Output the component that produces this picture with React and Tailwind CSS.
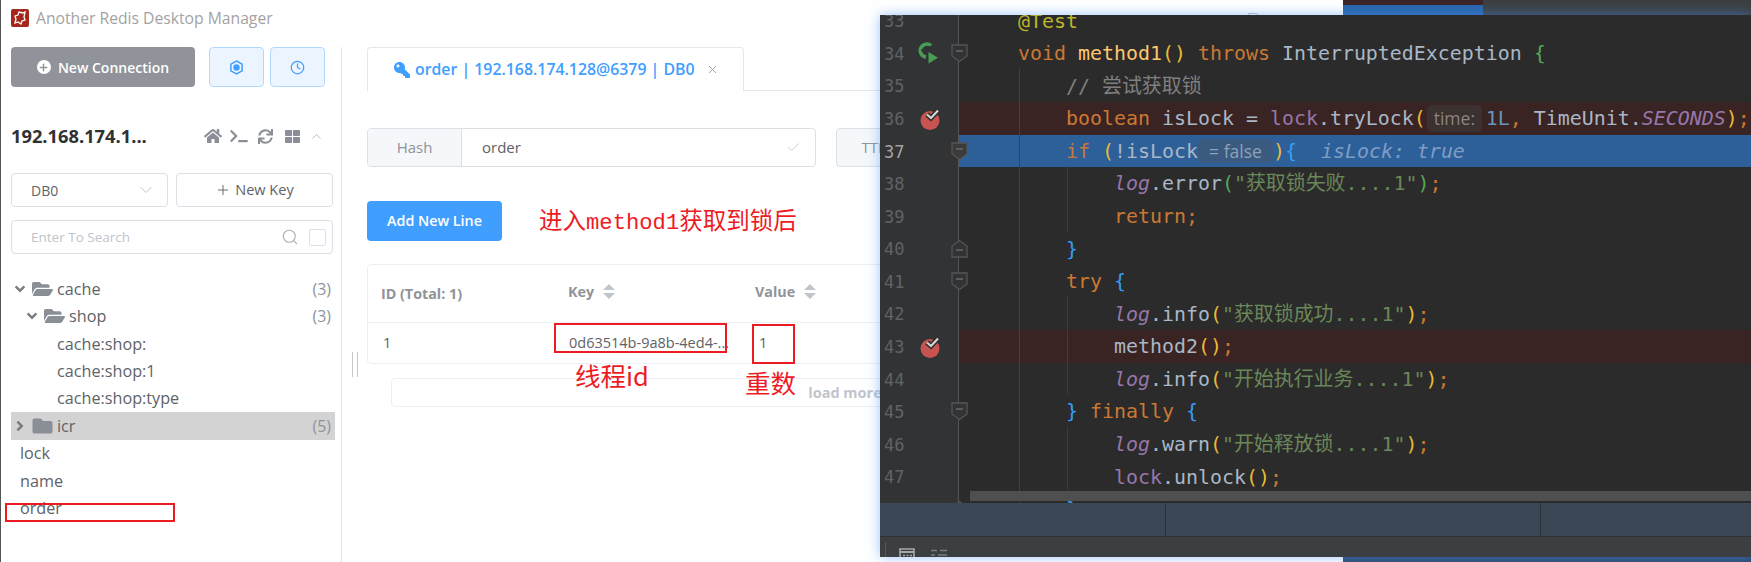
import React from "react";
import { FaHome, FaTerminal, FaSync, FaThLarge, FaFolderOpen, FaFolder, FaKey, FaAngleDown, FaAngleRight } from "react-icons/fa";
import { ChevronDown, ChevronUp, Check, Clock, Plus, Search, X, Square } from "lucide-react";

const ui = "font-['Open_Sans','Noto_Sans_CJK_SC',sans-serif]";

const kw = "text-[#cc7832]";
const pl = "text-[#a9b7c6]";
const pu = "text-[#9876aa]";
const lg = "text-[#9876aa] italic";
const st = "text-[#6a8759]";
const ye = "text-[#e8ba36]";
const gr = "text-[#54a857]";
const bl = "text-[#359ff4]";

const logCall = (fn, str, paren = ye) => [
  ["        "],
  ["log", lg],
  ["." + fn, pl],
  ["(", paren],
  [str, st],
  [")", paren],
  [";", kw],
];

const lines = [
  { n: 33, code: [["@Test", "text-[#bbb529]"]] },
  {
    n: 34,
    mark: "run",
    fold: "down",
    code: [["void", kw], [" "], ["method1", "text-[#ffc66d]"], ["()", ye], [" "], ["throws", kw], [" InterruptedException", pl], [" "], ["{", gr]],
  },
  { n: 35, code: [["    // 尝试获取锁", "text-[#808080]"]] },
  {
    n: 36,
    mark: "break",
    bg: "bg-[#3a2323]",
    code: [
      ["    "],
      ["boolean", kw],
      [" isLock = ", pl],
      ["lock", pu],
      [".tryLock", pl],
      ["(", ye],
      { hint: "time:", cls: "w-[55px] h-[27px] ml-[1px] mr-[4px] bg-[#3b3130] text-[#8a8482]" },
      ["1L", "text-[#6897bb]"],
      [",", kw],
      [" TimeUnit.", pl],
      ["SECONDS", lg],
      [")", ye],
      [";", kw],
    ],
  },
  {
    n: 37,
    current: true,
    fold: "down",
    bg: "bg-[#2d5f99]",
    code: [
      ["    "],
      ["if", kw],
      [" "],
      ["(", ye],
      ["!isLock", pl],
      { hint: "= false", cls: "w-[75px] h-[24px] bg-[#3b5a80] text-[#8ea2b8]" },
      [")", ye],
      ["{", bl],
      ["  isLock: true", "text-[#7e9dc4] italic"],
    ],
  },
  { n: 38, code: logCall("error", '"获取锁失败....1"', gr) },
  { n: 39, code: [["        return;", kw]] },
  { n: 40, fold: "up", code: [["    "], ["}", bl]] },
  { n: 41, fold: "down", code: [["    "], ["try", kw], [" "], ["{", bl]] },
  { n: 42, code: logCall("info", '"获取锁成功....1"') },
  { n: 43, mark: "break", bg: "bg-[#3a2323]", code: [["        method2", pl], ["()", ye], [";", kw]] },
  { n: 44, code: logCall("info", '"开始执行业务....1"') },
  { n: 45, fold: "down", code: [["    "], ["}", bl], [" "], ["finally", kw], [" "], ["{", bl]] },
  { n: 46, code: logCall("warn", '"开始释放锁....1"') },
  { n: 47, code: [["        "], ["lock", pu], [".unlock", pl], ["()", ye], [";", kw]] },
  { n: 48, fold: "up", code: [["    "], ["}", bl]] },
];

const BreakMark = () => (
  <svg width="24" height="24" viewBox="0 0 24 24" className="absolute left-[39px] top-[5px]">
    <circle cx="11" cy="13.5" r="9.5" fill="#c75450" />
    <path d="M8 7.5l4 3.5 7-7.5" fill="none" stroke="#2b2b2b" strokeWidth="5" />
    <path d="M8 7.5l4 3.5 7-7.5" fill="none" stroke="#d6d6d6" strokeWidth="2.2" />
  </svg>
);

const RunMark = () => (
  <svg width="22" height="22" viewBox="0 0 22 22" className="absolute left-[37px] top-[5px]">
    <path d="M14 3.6A6.5 6.5 0 1 0 9 15" fill="none" stroke="#499c54" strokeWidth="3.6" />
    <path d="M4.5 7.5l3.2 3 5.5-6" fill="none" stroke="#313335" strokeWidth="2" />
    <path d="M11.5 10l9.5 5.7-9.5 5.7z" fill="#499c54" />
  </svg>
);

const FoldMark = ({ dir, dark }) => (
  <svg width="17" height="19" viewBox="0 0 17 19" className="absolute left-[71px] top-[7px]">
    {dir === "down" ? (
      <path d="M1 1h15v11l-7.5 5.5L1 12z" fill={dark ? "#3b3b3b" : "#313335"} stroke="#555" strokeWidth="1.3" />
    ) : (
      <path d="M1 18h15V7L8.5 1.5 1 7z" fill="#313335" stroke="#555" strokeWidth="1.3" />
    )}
    <path d={dir === "down" ? "M5 7h7" : "M5 11h7"} stroke="#777" strokeWidth="1.2" />
  </svg>
);

const CodeLine = ({ line }) => (
  <div className="flex h-[32.57px] shrink-0">
    <div className="relative w-[79px] shrink-0 border-r border-[#555555] bg-[#313335] pl-[4px] pt-[1px] text-[17px] leading-[32.57px]">
      <span className={line.current ? "text-[#a4a3a3]" : "text-[#606366]"}>{line.n}</span>
      {line.mark === "break" && <BreakMark />}
      {line.mark === "run" && <RunMark />}
      {line.fold && <FoldMark dir={line.fold} dark={line.current} />}
    </div>
    <div className={`flex flex-1 items-center whitespace-pre pl-[59px] pt-[2px] text-[19.93px] ${line.bg || ""}`}>
      {line.code.map((t, i) =>
        t.hint ? (
          <span key={i} className={`${ui} -mt-[2px] flex items-center justify-center rounded-[5px] text-[17.5px] ${t.cls}`}>
            {t.hint}
          </span>
        ) : (
          <span key={i} className={t[1]}>
            {t[0]}
          </span>
        )
      )}
    </div>
  </div>
);

const EditorWindow = () => (
  <div className="absolute left-[880px] top-[15px] flex h-[542px] w-[871px] flex-col bg-[#2b2b2b] font-['DejaVu_Sans_Mono','Noto_Sans_CJK_SC',monospace] shadow-[0_0_12px_rgba(70,150,255,0.55)]">
    <div className="relative h-[488px] shrink-0 overflow-hidden">
      <div className="-mt-[10.7px] flex flex-col">
        {lines.map((l) => (
          <CodeLine key={l.n} line={l} />
        ))}
      </div>
      <div className="absolute left-[139px] top-[54px] bottom-0 w-px bg-[#3f4442]" />
      <div className="absolute left-[187px] top-[152px] h-[65px] w-px bg-[#2f4053]" />
      <div className="absolute left-[187px] top-[282px] h-[97px] w-px bg-[#2f4053]" />
      <div className="absolute left-[187px] top-[412px] h-[65px] w-px bg-[#2f4053]" />
      <div className="absolute bottom-[2px] left-[90px] right-0 h-[10px] bg-[#4f4f4f]" />
    </div>
    <div className="flex h-[34px] shrink-0 border-b border-[#2f3235] bg-[#3b4754]">
      <div className="w-[286px] border-r border-[#2f3235]" />
      <div className="w-[375px] border-r border-[#2f3235]" />
    </div>
    <div className="flex flex-1 items-start overflow-hidden bg-[#3c3f41] pl-[5px] pt-[5px]">
      <div className="h-[15px] w-px bg-[#55585a]" />
      <svg width="16" height="15" viewBox="0 0 16 15" className="ml-[13px] mt-[6px] shrink-0">
        <path d="M1 1h14v14H1z" fill="none" stroke="#a5a8aa" strokeWidth="1.6" />
        <path d="M1 4h14" stroke="#a5a8aa" strokeWidth="2" />
        <path d="M4 7.5h2M7.5 7.5h2M11 7.5h2" stroke="#a5a8aa" strokeWidth="1.6" />
      </svg>
      <svg width="16" height="15" viewBox="0 0 16 15" className="ml-[16px] mt-[6px] shrink-0">
        <path d="M0 2.5h6M9 2.5h7M0 7h4M7 7h9M2 12h10" stroke="#7a7d80" strokeWidth="1.6" />
      </svg>
    </div>
  </div>
);

const TreeRow = ({ pad, open, label, count, active, leaf }) => {
  const Folder = open ? FaFolderOpen : FaFolder;
  const Angle = open ? FaAngleDown : FaAngleRight;
  return (
    <div className={`flex h-[27.4px] items-center pr-[4px] ${active ? "bg-[#d3d3d3]" : ""}`} style={{ paddingLeft: pad }}>
      {!leaf && (
        <>
          <Angle className="-ml-[1px] mr-[4px] h-[16px] w-[16px] shrink-0 text-[#7a7d82]" />
          <Folder className="mr-[4px] h-[20px] w-[21px] shrink-0 text-[#8a8e96]" />
        </>
      )}
      <span className="text-[16.2px] text-[#606266]">{label}</span>
      {count && <span className="ml-auto text-[16px] text-[#909399]">{count}</span>}
    </div>
  );
};

const SortCaret = () => (
  <svg width="12" height="15" viewBox="0 0 12 15" className="ml-[9px]">
    <path d="M6 0l6 6H0zM0 9h12l-6 6z" fill="#c0c4cc" />
  </svg>
);

const Sidebar = () => (
  <aside className="w-[342px] shrink-0 border-r border-[#e4e5e8] pl-[11px] pr-[6px]">
    <div className="flex">
      <button className="flex h-[40px] w-[184px] items-center justify-center rounded-[4px] bg-[#909399] text-[14px] font-semibold text-white">
        <span className="mr-[7px] flex h-[14px] w-[14px] items-center justify-center rounded-full bg-white">
          <Plus size={11} strokeWidth={3} className="text-[#909399]" />
        </span>
        New Connection
      </button>
      <button className="ml-[14px] flex h-[40px] w-[55px] items-center justify-center rounded-[4px] border border-[#b3d8ff] bg-[#ecf5ff]">
        <svg width="15" height="15" viewBox="0 0 15 15">
          <path d="M7.5 1l5.6 3.2v6.6L7.5 14l-5.6-3.2V4.2z" fill="none" stroke="#409eff" strokeWidth="1.5" />
          <circle cx="7.5" cy="7.5" r="3.2" fill="#409eff" />
        </svg>
      </button>
      <button className="ml-[6px] flex h-[40px] w-[55px] items-center justify-center rounded-[4px] border border-[#b3d8ff] bg-[#ecf5ff]">
        <Clock size={15} className="text-[#409eff]" />
      </button>
    </div>
    <div className="mt-[34px] flex h-[30px] items-center">
      <span className="text-[18.3px] font-bold text-[#303133]">192.168.174.1...</span>
      <div className="ml-auto mr-[11px] flex items-center text-[#8a8e96]">
        <FaHome className="h-[18px] w-[18px]" />
        <FaTerminal className="ml-[7px] h-[14px] w-[20px]" />
        <FaSync className="ml-[9px] h-[15px] w-[15px]" />
        <FaThLarge className="ml-[12px] h-[15px] w-[15px]" />
        <ChevronUp size={15} className="ml-[9px] text-[#b4b7bd]" strokeWidth={1.5} />
      </div>
    </div>
    <div className="mt-[22px] flex w-[322px] gap-[8px]">
      <div className="flex h-[34px] w-[157px] items-center justify-between rounded-[4px] border border-[#dcdfe6] pl-[19px] pr-[11px] text-[14px] text-[#606266]">
        DB0
        <ChevronDown size={20} strokeWidth={1.2} className="text-[#c0c4cc]" />
      </div>
      <button className="flex h-[34px] w-[157px] items-center justify-center rounded-[4px] border border-[#dcdfe6] text-[14.5px] font-medium text-[#606266]">
        <Plus size={16} strokeWidth={1.4} className="mr-[4px]" />
        New Key
      </button>
    </div>
    <div className="mt-[13px] flex h-[34px] w-[322px] items-center rounded-[4px] border border-[#dcdfe6] pl-[19px] pr-[6px]">
      <span className="text-[13.5px] text-[#c0c4cc]">Enter To Search</span>
      <Search size={18} strokeWidth={1.5} className="ml-auto text-[#b0b3b9]" />
      <span className="ml-[10px] h-[17px] w-[17px] rounded-[2px] border border-[#dcdfe6]" />
    </div>
    <div className="mt-[21.3px]">
      <TreeRow pad={2} open label="cache" count="(3)" />
      <TreeRow pad={14} open label="shop" count="(3)" />
      <TreeRow pad={46} leaf label="cache:shop:" />
      <TreeRow pad={46} leaf label="cache:shop:1" />
      <TreeRow pad={46} leaf label="cache:shop:type" />
      <TreeRow pad={2} label="icr" count="(5)" active />
      <TreeRow pad={9} leaf label="lock" />
      <TreeRow pad={9} leaf label="name" />
      <TreeRow pad={9} leaf label="order" />
    </div>
  </aside>
);

const KeyPanel = () => (
  <main className="flex-1 pr-[20px]">
    <div className="flex h-[44px] border-b border-[#e4e7ed]">
      <div className="flex h-[44px] w-[377px] items-center rounded-t-[4px] border border-b-0 border-[#e4e7ed] bg-white pl-[26px] text-[15.85px] font-semibold text-[#409eff]">
        <FaKey className="mr-[5px] h-[16px] w-[16px] -scale-x-100" />
        order | 192.168.174.128@6379 | DB0
        <X size={13} strokeWidth={1.5} className="ml-[11px] text-[#909399]" />
      </div>
    </div>
    <div className="mt-[37px] flex">
      <div className="flex h-[39px] w-[449px] overflow-hidden rounded-[4px] border border-[#dcdfe6]">
        <div className="flex w-[94px] items-center justify-center border-r border-[#dcdfe6] bg-[#f5f7fa] text-[15px] text-[#909399]">Hash</div>
        <div className="flex flex-1 items-center justify-between pl-[20px] pr-[14px] text-[15px] text-[#606266]">
          order
          <Check size={15} strokeWidth={1.4} className="text-[#c0c4cc]" />
        </div>
      </div>
      <div className="ml-[19.5px] flex h-[39px] w-[300px] items-center rounded-[4px] border border-[#dcdfe6] bg-[#f5f7fa] pl-[25px] text-[15px] text-[#909399]">TTL</div>
    </div>
    <div className="mt-[34px] flex items-center">
      <button className="flex h-[40px] w-[135px] items-center justify-center rounded-[4px] bg-[#409eff] text-[14.3px] font-semibold text-white">Add New Line</button>
      <span className="ml-[37px] whitespace-nowrap font-['Noto_Sans_CJK_SC',serif] text-[23.5px] leading-[28px] text-[#ed1c24]">
        进入<span className="font-['Liberation_Mono',monospace] text-[22.2px]">method1</span>获取到锁后
      </span>
    </div>
    <div className="mt-[23px] rounded-[4px] border border-[#ebeef5]">
      <div className="flex h-[58px] items-center border-b border-[#ebeef5] text-[14.3px] font-bold text-[#909399]">
        <div className="w-[187px] pl-[13px]">ID (Total: 1)</div>
        <div className="flex w-[187px] -translate-y-[2px] items-center pl-[13px]">Key<SortCaret /></div>
        <div className="flex w-[187px] -translate-y-[2px] items-center pl-[13px]">Value<SortCaret /></div>
      </div>
      <div className="flex h-[40px] items-center text-[14.5px] text-[#606266]">
        <div className="w-[187px] pl-[15px]">1</div>
        <div className="w-[187px] pl-[14px]">0d63514b-9a8b-4ed4-...</div>
        <div className="w-[187px] pl-[17px]">1</div>
      </div>
    </div>
    <div className="mx-[24px] mt-[14px] flex h-[29px] items-center justify-center rounded-[4px] border border-[#ebeef5] text-[14.5px] font-bold text-[#c0c4cc]">
      load more
    </div>
  </main>
);

export default function App() {
  return (
    <div className={`relative h-[562px] w-[1751px] overflow-hidden bg-white ${ui}`}>
      {/* desktop behind the two windows */}
      <div className="absolute right-0 top-0 h-[562px] w-[408px] bg-[#2f4a6d]">
        <div className="flex h-[15px]">
          <div className="w-[140px]">
            <div className="h-[5px] bg-[#3c2525]" />
            <div className="h-[10px] bg-[#2a65a8]" />
          </div>
          <div className="flex-1 bg-[#3c3f41]" />
        </div>
      </div>

      <div className="relative flex h-[562px] w-[1343px] flex-col bg-white">
        <div className="flex h-[47px] shrink-0 items-start pl-[11px] pt-[9px] pr-[23px]">
          <svg width="18" height="18" viewBox="0 0 18 18" className="shrink-0">
            <rect width="18" height="18" rx="2" fill="#a5281b" />
            <path d="M4 7l3-1 1-3 4 1 2-1-1 5 1 3-3 1-1 3-3-2-3 1 1-4z" fill="none" stroke="#fff" strokeWidth="1.3" />
          </svg>
          <span className="ml-[7px] text-[15.7px] leading-[18px] text-[#a3a3a3]">Another Redis Desktop Manager</span>
          <Square size={12} strokeWidth={1} className="ml-auto mt-[3px] text-[#888]" />
          <X size={13} strokeWidth={1} className="ml-[48px] mt-[3px] text-[#888]" />
        </div>
        <div className="flex flex-1">
          <Sidebar />
          <div className="w-[25px] shrink-0 pl-[10px] pt-[305px]">
            <div className="h-[25px] w-[6px] border-x border-[#c8c8c8]" />
          </div>
          <KeyPanel />
        </div>
      </div>

      {/* strip of the terminal/desktop on the far left */}
      <div className="absolute left-0 top-0 h-[562px] w-px bg-[#555]" />

      {/* red annotations drawn over the screenshot */}
      <div className="absolute left-[5px] top-[503px] h-[19px] w-[170px] border-2 border-[#ed1c24]" />
      <div className="absolute left-[554px] top-[323px] h-[30px] w-[173px] border-2 border-[#ed1c24]" />
      <div className="absolute left-[752px] top-[324px] h-[40px] w-[43px] border-2 border-[#ed1c24]" />
      <div className="absolute left-[575px] top-[359px] font-['Noto_Sans_CJK_SC',sans-serif] text-[25.5px] leading-[32px] text-[#ed1c24]">线程id</div>
      <div className="absolute left-[745px] top-[366px] font-['Noto_Sans_CJK_SC',sans-serif] text-[25.5px] leading-[32px] text-[#ed1c24]">重数</div>

      <EditorWindow />
    </div>
  );
}
